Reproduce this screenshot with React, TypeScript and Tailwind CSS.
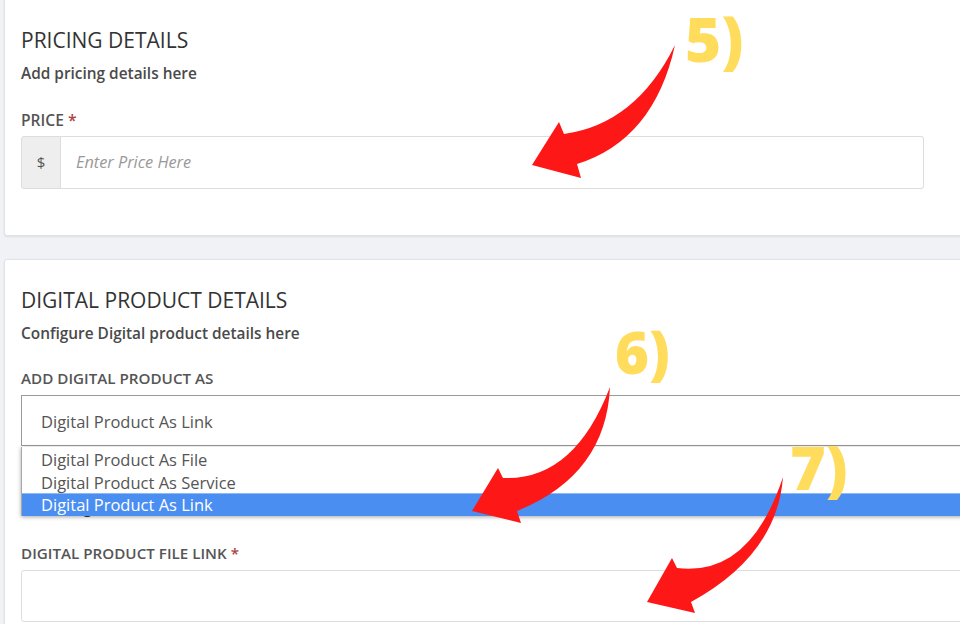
import React from "react";

export default function App() {
  return (
    <div className="relative w-[960px] h-[624px] overflow-hidden bg-[#f1f2f6] font-['Open_Sans',sans-serif]">
      {/* Card 1 */}
      <div className="ml-[4px] -mt-[11px] w-[1000px] bg-white border border-[#e1e2e6] rounded-[3px] shadow-[0_1px_2px_rgba(0,0,0,0.08)] pl-[16px] pt-[36px] pb-[46px]">
        <h2 className="text-[21px] leading-[28px] text-[#333] font-normal">PRICING DETAILS</h2>
        <p className="mt-[10px] text-[15.4px] leading-[20px] font-semibold text-[#4a4a4a]">Add pricing details here</p>
        <label className="mt-[26px] block text-[15.6px] leading-[20px] font-semibold text-[#555]">
          PRICE <span className="text-[#a94442]">*</span>
        </label>
        <div className="mt-[6px] flex w-[903px] h-[53px]">
          <div className="w-[40px] flex items-center justify-center bg-[#eeeeee] border border-[#dddddd] rounded-l-[3px] text-[15px] text-[#555]">
            $
          </div>
          <div className="flex-1 flex items-center border border-l-0 border-[#dddddd] rounded-r-[3px] pl-[15px] italic text-[16.3px] text-[#999]">
            Enter Price Here
          </div>
        </div>
      </div>

      {/* Card 2 */}
      <div className="ml-[4px] mt-[23px] w-[1000px] bg-white border border-[#e1e2e6] rounded-[3px] shadow-[0_1px_2px_rgba(0,0,0,0.08)] pl-[16px] pt-[26px] pb-[40px]">
        <h2 className="text-[21px] leading-[28px] text-[#333] font-normal">DIGITAL PRODUCT DETAILS</h2>
        <p className="mt-[10px] text-[15.4px] leading-[20px] font-semibold text-[#4a4a4a]">Configure Digital product details here</p>
        <label className="mt-[24px] block text-[15.2px] leading-[20px] font-semibold text-[#555]">ADD DIGITAL PRODUCT AS</label>
        <div className="relative mt-[7px] h-[51px] w-[1000px]">
          <div className="h-[51px] border border-[#9a9a9a] flex items-center pl-[19px] pt-[3px] text-[16.5px] text-[#555]">
            Digital Product As Link
          </div>
          <div className="absolute left-0 top-[52px] w-full z-10 bg-white border-l border-[#a8a8a8] shadow-[0_1px_4px_rgba(0,0,0,0.35)]">
            <div className="h-[23px] leading-[23px] pl-[19px] pt-[1px] text-[16.5px] text-[#555]">Digital Product As File</div>
            <div className="h-[23px] leading-[23px] pl-[19px] pt-[1px] text-[16.5px] text-[#555]">Digital Product As Service</div>
            <div className="h-[23px] leading-[22px] pl-[19px] text-[16.5px] text-white bg-[#4a8ef2] border-t border-[#8cb9f7]">Digital Product As Link</div>
          </div>
        </div>
        <p className="mt-[51px] text-[16px] leading-[20px] font-semibold text-[#333]">Enter Digital Product Link</p>
        <label className="mt-[26px] block text-[15.2px] leading-[20px] font-semibold text-[#555]">
          DIGITAL PRODUCT FILE LINK <span className="text-[#a94442]">*</span>
        </label>
        <div className="mt-[7px] h-[52px] w-[1000px] border border-[#dddddd] rounded-[3px]" />
      </div>

      {/* Annotations */}
      <svg className="absolute left-0 top-0 pointer-events-none z-20" width="960" height="624" viewBox="0 0 960 624">
        <path
          d="M675,45 Q636,124 564,134 L559,122 L532,165 L581,178 L577,164 Q654,140 675,45 Z"
          fill="#fe1717"
        />
        <path
          d="M610,387 Q574,481 503,478 L498,468 L472,511 L521,523 L517,511 Q606,475 610,387 Z"
          fill="#fe1717"
        />
        <path
          d="M783,477 Q750,577 677,568 L672,558 L647,602 L695,613 L691,602 Q777,555 783,477 Z"
          fill="#fe1717"
        />
      </svg>
      <span className="absolute left-[685px] top-[2px] z-30 text-[62px] leading-[72px] font-extrabold text-[#ffdc5c]">5)</span>
      <span className="absolute left-[615px] top-[318px] z-30 text-[58px] leading-[68px] font-extrabold text-[#ffdc5c]">6)</span>
      <span className="absolute left-[790px] top-[431px] z-30 text-[61px] leading-[72px] font-extrabold text-[#ffdc5c]">7)</span>
    </div>
  );
}
